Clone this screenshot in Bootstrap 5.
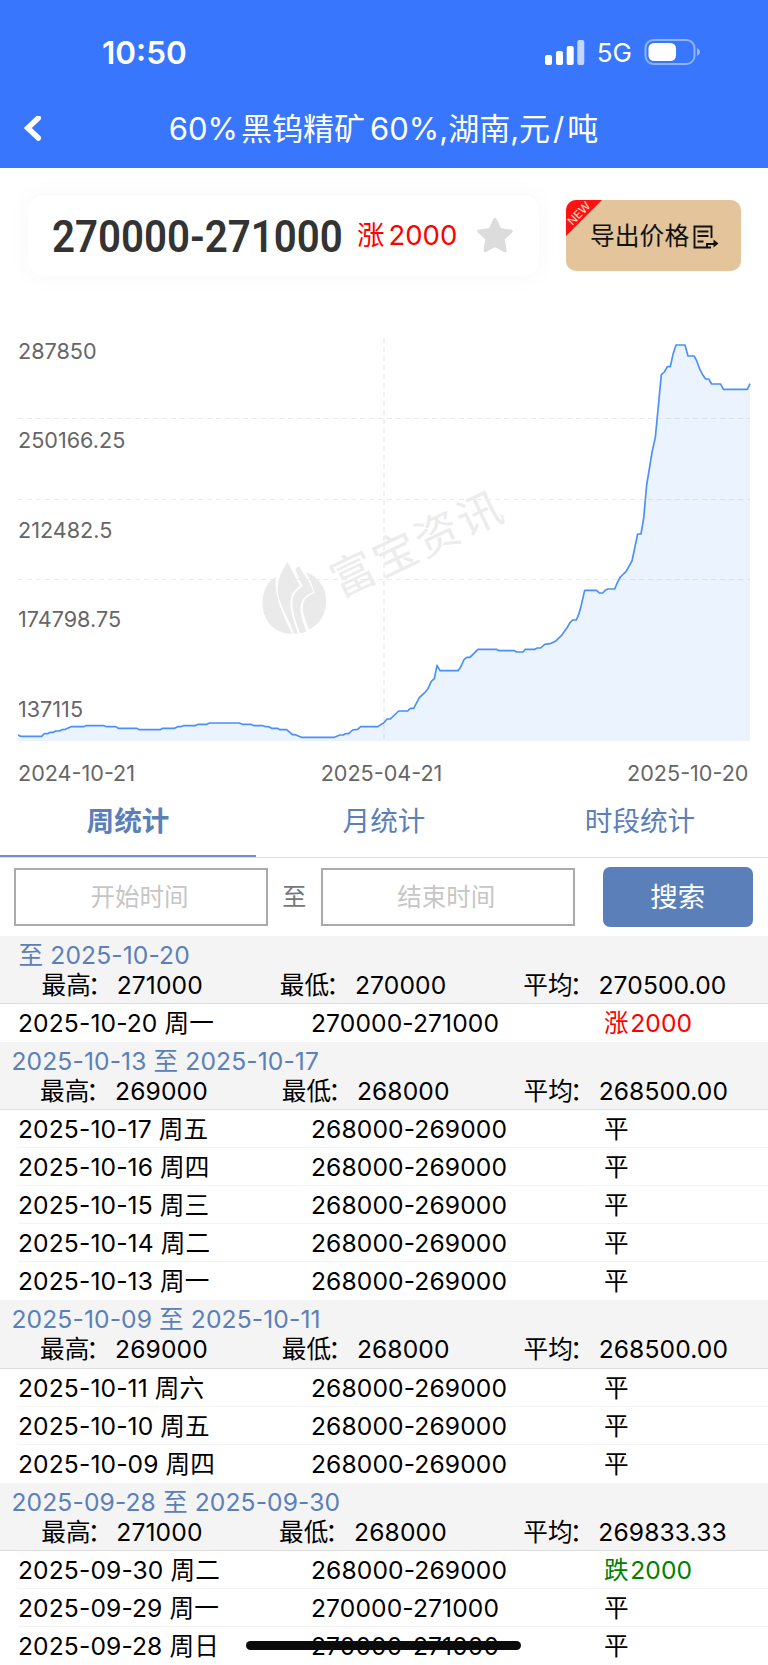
<!DOCTYPE html>
<html lang="zh-CN">
<head>
<meta charset="utf-8">
<meta name="viewport" content="width=device-width, initial-scale=1">
<title>60%黑钨精矿</title>
<link href="https://cdn.jsdelivr.net/npm/bootstrap@5.3.0/dist/css/bootstrap.min.css" rel="stylesheet">
<style>
body{font-family:Inter,"Noto Sans CJK SC",sans-serif;background:#fff;color:#000;width:768px;height:1665px;overflow:hidden;position:relative}
.topbar{background:#3876fe;height:167.5px;color:#fff}
.statusbar{height:90px;padding:15px 68px 0 102px}
.clock{font-size:31.5px;font-weight:600;line-height:1}
.net{font-size:26px;line-height:1}
.titlebar{height:77px;padding-left:24px}
.page-title{font-size:31px;font-weight:400;left:0;right:1px;line-height:77px}
.page-title i{font-style:normal;margin:0 5px 0 3px}
.page-title .sep{margin:0 3px}
.quote{padding:27.5px 27px 0 28px}
.price-box{width:511px;height:81px;border-radius:16px;box-shadow:0 0 24px rgba(0,0,0,.04);padding:0 25px 0 24px}
.price{font-family:Roboto,sans-serif;font-weight:600;font-size:44px;color:#333;width:305px;white-space:nowrap;transform:scaleX(.915);transform-origin:left;padding-top:2px}
.delta{font-size:27.5px;width:117px;padding-top:1px}
.gap-r{margin-right:4px}
.rec .gap-r{margin-right:1.5px}
.up{color:#f00}.down{color:#008000}
.export{width:175px;height:71px;background:#e4c49b;border-radius:10px;font-size:24.8px;padding:2px 0 0 24px;color:#111}
.ribbon{left:0;top:0}
.chart{display:block}
.chart text{font-size:21.6px;fill:#666}
.tabs{height:69px;border-bottom:1px solid #ddd}
.tabs a{width:256px;font-size:27.6px;color:#5b80b9;text-decoration:none;line-height:65px}
.tabs a.active{font-weight:700;border-bottom:2.5px solid #6f91c8}
.filter{height:78px;padding:0 15px 0 14px}
.filter input{width:254px;height:58px;border:2px solid #aaa;text-align:center;font-size:24.5px;background:#fff;padding:0 3px 0 0}
.filter input::placeholder{color:#c6c6c6;opacity:1}
.filter span{width:53px;font-size:24px;color:#777}
.filter button{width:151px;height:60px;background:#5b80b9;color:#fff;font-size:27.5px;border:0;border-radius:7px;margin-left:28px;padding-top:3px}
.grp,.rec{font-size:24.6px;line-height:30px;letter-spacing:.12px;white-space:pre}
.grp{height:68.2px;background:#f4f4f4;border-bottom:1.5px solid #ddd;padding-top:4px}
.grp .range{color:#5b80b9;padding-left:11.5px}
.grp .stats{padding:0 3px}
.stats i{font-style:normal;display:inline-block;transform:translateX(-3px);margin-right:1px}
.rec{height:38px;margin-left:18px;border-bottom:1px solid #f4f4f4;line-height:38px}
.rec.last{border:0}
.rec div:nth-child(1),.rec div:nth-child(2){width:293px}
.homebar{left:246px;top:1641px;width:275px;height:9px;border-radius:5px;background:#0b0b0b}
</style>
</head>
<body>
<header class="topbar">
  <div class="statusbar d-flex justify-content-between align-items-center">
    <div class="clock">10:50</div>
    <div class="d-flex align-items-center">
      <svg width="40" height="26" viewBox="0 0 40 26" fill="#fff"><rect y="15" width="7" height="10" rx="2"/><rect x="11" y="11" width="7" height="14" rx="2"/><rect x="21.7" y="6" width="7" height="19" rx="2"/><rect x="32.3" width="7" height="25" rx="2" opacity=".7"/></svg>
      <span class="net ps-2 ms-1 me-2 pe-1">5G</span>
      <svg width="56" height="27" viewBox="0 0 56 27"><rect x="1.5" y="1" width="49" height="24" rx="8" fill="none" stroke="#fff" stroke-opacity=".45" stroke-width="2"/><rect x="4.500" y="4" width="27.500" height="18" rx="5.500" fill="#fff"/><path d="M53 9q3 1.500 3 4t-3 4z" fill="#fff" fill-opacity=".5"/></svg>
    </div>
  </div>
  <div class="titlebar position-relative d-flex align-items-center">
    <svg width="18" height="26" viewBox="0 0 18 26"><path d="M14.300 2 3.800 12l10.500 10" fill="none" stroke="#fff" stroke-width="5.500" stroke-linecap="round"/></svg>
    <div class="page-title position-absolute text-center">60%<i>黑钨精矿</i>60%,湖南,元<span class="sep">/</span>吨</div>
  </div>
</header>

<main>
  <section class="quote d-flex justify-content-between align-items-center">
    <div class="price-box d-flex align-items-center">
      <div class="price">270000-271000</div>
      <div class="delta up"><span class="gap-r">涨</span>2000</div>
      <svg class="ms-auto me-0" width="38" height="38" viewBox="0 0 38 38"><path d="M19 2.500l4.800 10.300 11.200 1.500-8.200 7.800 2 11.400L19 28.200 9.200 33.500l2-11.400L3 14.300l11.200-1.500z" fill="#dcdcdc" stroke="#dcdcdc" stroke-width="3.500" stroke-linejoin="round"/></svg>
    </div>
    <div class="export position-relative overflow-hidden d-flex align-items-center">
      <svg class="ribbon position-absolute" width="37" height="37"><path d="M0 0h36L0 36z" fill="#f11"/><text transform="translate(6.500 26) rotate(-46)" font-size="11.500" font-weight="500" fill="#fbd0b0">NEW</text></svg>
      <span>导出价格</span>
      <svg class="ms-1" width="26" height="24" viewBox="0 0 26 24" fill="none" stroke="#111" stroke-width="1.900"><path d="M18.500 13V1.500h-17v21h12.500v-3.500h9M4.500 6.500h11M4.500 11h11M4.500 16.500h6M14 22.500h4"/><path d="M20.500 14.500l5 4-5 4z" fill="#111" stroke="none"/></svg>
    </div>
  </section>

  <svg class="chart" width="768" height="513" viewBox="0 276 768 513">
    <defs>
      <path id="trend" d="M54 1245L62 1249 125 1249 133 1241 143 1241 150 1237 160 1237 167 1233 178 1233 186 1229 196 1228 213 1220 250 1220 258 1217 312 1217 320 1220 347 1220 355 1225 410 1225 418 1229 480 1229 488 1225 524 1225 533 1220 542 1220 550 1217 586 1217 594 1213 621 1213 629 1209 718 1209 727 1213 753 1213 762 1217 789 1217 797 1220 806 1220 815 1225 832 1225 840 1229 860 1229 877 1244 886 1244 904 1252 1003 1252 1020 1245 1030 1245 1036 1241 1046 1241 1058 1230 1073 1228 1082 1220 1134 1220 1144 1213 1151 1209 1161 1197 1171 1197 1196 1173 1223 1173 1231 1165 1241 1165 1258 1133 1274 1118 1284 1106 1294 1084 1303 1076 1311 1036 1320 1052 1374 1052 1382 1041 1392 1019 1400 1012 1410 1012 1434 988 1489 988 1497 992 1543 992 1550 996 1569 996 1576 988 1604 988 1612 984 1622 984 1634 973 1650 971 1666 964 1684 947 1700 925 1710 908 1718 900 1729 900 1736 884 1744 855 1754 811 1790 811 1798 819 1808 819 1816 811 1824 807 1844 807 1852 788 1861 771 1878 755 1896 723 1913 642 1923 642 1931 595 1940 495 1957 392 1966 352 1984 164 1993 156 2002 140 2011 140 2019 103 2028 75 2055 75 2064 108 2082 108 2090 122 2100 149 2108 164 2117 177 2126 177 2135 192 2162 192 2170 208 2242 208 2250 191"/>
    </defs>
    <g stroke="#ebebeb" stroke-width="1.200" stroke-dasharray="5 4"><path d="M18 418.500H750M18 499.500H750M18 579.500H750"/><path d="M384 338V741" stroke="#f0f0f0" stroke-width="2"/></g>
    <g transform="translate(250 480) scale(.33333)" fill="#eaeaea">
      <path d="M77 290C20 325 22 435 100 458Q112 462 126 461C95 395 73 350 77 290z"/>
      <path d="M112 246C94 275 82 300 83 330 86 375 115 410 132 461L144 461C128 415 115 375 124 350 130 332 142 324 151 316 138 300 128 272 112 246z"/>
      <path d="M147 257L136 268C145 290 150 303 158 318 138 333 127 345 127 370 128 400 140 430 150 460L170 455C158 425 145 392 155 365 162 350 176 342 190 335 178 300 160 285 147 257z"/>
      <path d="M168 275C180 295 186 315 194 338 150 356 150 383 178 449 250 410 245 305 168 275z"/>
    </g>
    <text transform="translate(340 598) rotate(-25.500)" style="font-size:44px;fill:#ececec;letter-spacing:2.600px">富宝资讯</text>
    <g transform="translate(0 320) scale(.33333)">
      <path fill="#3c8cff" fill-opacity=".1" d="M54 1245L62 1249 125 1249 150 1237 213 1220 258 1217 312 1217 355 1225 418 1229 480 1229 550 1217 629 1209 718 1209 797 1220 860 1229 904 1252 1003 1252 1046 1241 1082 1220 1134 1220 1161 1197 1196 1173 1241 1165 1258 1133 1284 1106 1303 1076 1311 1036 1320 1052 1374 1052 1400 1012 1434 988 1489 988 1550 996 1622 984 1666 964 1700 925 1718 900 1729 900 1744 855 1754 811 1790 811 1808 819 1844 807 1861 771 1896 723 1913 642 1923 642 1931 595 1940 495 1957 392 1966 352 1984 164 2002 140 2011 140 2028 75 2055 75 2064 108 2082 108 2108 164 2135 192 2162 192 2170 208 2242 208 2250 191V1263H54z"/>
      <use href="#trend" fill="none" stroke="#4a90fc" stroke-width="5" stroke-linejoin="round"/>
    </g>
    <g><text x="18" y="359">287850</text><text x="18" y="448">250166.25</text><text x="18" y="538">212482.5</text><text x="18" y="627">174798.75</text><text x="18" y="717">137115</text><text x="18" y="780.500">2024-10-21</text><text x="381.500" y="780.500" text-anchor="middle">2025-04-21</text><text x="748.500" y="780.500" text-anchor="end">2025-10-20</text></g>
  </svg>

  <nav class="tabs d-flex text-center"><a class="active" href="#">周统计</a><a href="#">月统计</a><a href="#">时段统计</a></nav>
  <form class="filter d-flex align-items-center"><input placeholder="开始时间"><span class="text-center">至</span><input placeholder="结束时间"><button type="button">搜索</button></form>

  <div class="grp"><div class="range"> 至 2025-10-20</div><div class="stats d-flex justify-content-around"><div>最高<i>：</i>271000</div><div>最低<i>：</i>270000</div><div>平均<i>：</i>270500.00</div></div></div>
  <div class="rec last d-flex"><div>2025-10-20 周一</div><div>270000-271000</div><div class="up"><span class="gap-r">涨</span>2000</div></div>

  <div class="grp"><div class="range">2025-10-13 至 2025-10-17</div><div class="stats d-flex justify-content-around"><div>最高<i>：</i>269000</div><div>最低<i>：</i>268000</div><div>平均<i>：</i>268500.00</div></div></div>
  <div class="rec d-flex"><div>2025-10-17 周五</div><div>268000-269000</div><div>平</div></div>
  <div class="rec d-flex"><div>2025-10-16 周四</div><div>268000-269000</div><div>平</div></div>
  <div class="rec d-flex"><div>2025-10-15 周三</div><div>268000-269000</div><div>平</div></div>
  <div class="rec d-flex"><div>2025-10-14 周二</div><div>268000-269000</div><div>平</div></div>
  <div class="rec last d-flex"><div>2025-10-13 周一</div><div>268000-269000</div><div>平</div></div>

  <div class="grp"><div class="range">2025-10-09 至 2025-10-11</div><div class="stats d-flex justify-content-around"><div>最高<i>：</i>269000</div><div>最低<i>：</i>268000</div><div>平均<i>：</i>268500.00</div></div></div>
  <div class="rec d-flex"><div>2025-10-11 周六</div><div>268000-269000</div><div>平</div></div>
  <div class="rec d-flex"><div>2025-10-10 周五</div><div>268000-269000</div><div>平</div></div>
  <div class="rec last d-flex"><div>2025-10-09 周四</div><div>268000-269000</div><div>平</div></div>

  <div class="grp"><div class="range">2025-09-28 至 2025-09-30</div><div class="stats d-flex justify-content-around"><div>最高<i>：</i>271000</div><div>最低<i>：</i>268000</div><div>平均<i>：</i>269833.33</div></div></div>
  <div class="rec d-flex"><div>2025-09-30 周二</div><div>268000-269000</div><div class="down"><span class="gap-r">跌</span>2000</div></div>
  <div class="rec d-flex"><div>2025-09-29 周一</div><div>270000-271000</div><div>平</div></div>
  <div class="rec last d-flex"><div>2025-09-28 周日</div><div>270000-271000</div><div>平</div></div>
</main>
<div class="homebar position-absolute"></div>
<script src="https://cdn.jsdelivr.net/npm/bootstrap@5.3.0/dist/js/bootstrap.bundle.min.js"></script>
</body>
</html>
